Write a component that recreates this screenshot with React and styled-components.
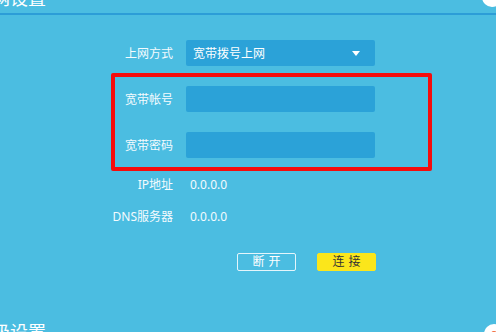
import React from 'react'
import styled, { createGlobalStyle } from 'styled-components'

const GlobalStyle = createGlobalStyle`
  html, body {
    margin: 0;
    padding: 0;
    background: #4bbde1;
  }
  body {
    font-family: "Noto Sans", "Noto Sans CJK SC", sans-serif;
    overflow: hidden;
  }
`

const Page = styled.div`
  position: relative;
  width: 496px;
  height: 332px;
  overflow: hidden;
  background: #4bbde1;
  color: #fff;
`

const Header = styled.div`
  display: flex;
  align-items: flex-end;
  height: 13px;
  border-bottom: 2px solid #2c9dd7;
`

const SectionTitle = styled.h2`
  margin: 0 0 ${({ $mb }) => $mb || 0}px -26px;
  font-size: 18px;
  line-height: 18px;
  font-weight: 400;
  white-space: nowrap;
`

const HelpBadge = styled.svg`
  position: absolute;
  right: ${({ $right }) => $right}px;
  ${({ $top }) => ($top !== undefined ? `top: ${$top}px;` : '')}
  ${({ $bottom }) => ($bottom !== undefined ? `bottom: ${$bottom}px;` : '')}
  width: 20px;
  height: 20px;
`

const Form = styled.div`
  margin: 25px 0 0 111px;
  width: 321px;
  display: flex;
  flex-direction: column;
`

const Row = styled.div`
  display: grid;
  grid-template-columns: 62px 189px;
  column-gap: 13px;
  align-items: center;
  height: ${({ $h }) => $h}px;
  margin-top: ${({ $mt }) => $mt || 0}px;
`

const Label = styled.div`
  text-align: right;
  font-size: 12px;
  white-space: nowrap;
  color: #f4fbfe;
`

const Field = styled.div`
  box-sizing: border-box;
  height: 26px;
  padding: 0 7px;
  display: flex;
  align-items: center;
  justify-content: space-between;
  background: #2ba2d8;
  border-radius: 2px;
  font-size: 12px;
`

const Caret = styled.span`
  width: 0;
  height: 0;
  margin-right: 8px;
  border-left: 4px solid transparent;
  border-right: 4px solid transparent;
  border-top: 5px solid #fff;
`

const Highlight = styled.div`
  margin-top: 7px;
  padding: 13px 0;
  display: flex;
  flex-direction: column;
  gap: 20px;
  border-radius: 2px;
  box-shadow: inset 0 0 0 4px #f50c0c;
`

const Value = styled.div`
  padding-left: 4px;
  font-size: 12px;
  color: #f4fbfe;
`

const Actions = styled.div`
  display: flex;
  justify-content: flex-end;
  gap: 21px;
  margin-right: -1px;
`

const Button = styled.button`
  box-sizing: border-box;
  width: 59px;
  height: 18px;
  padding: 0;
  border-radius: 2px;
  font-family: inherit;
  font-size: 12px;
  line-height: 16px;
  letter-spacing: 4px;
  text-indent: 4px;
  border: 1px solid ${({ $primary }) => ($primary ? '#fbe61b' : 'rgba(255,255,255,0.85)')};
  background: ${({ $primary }) => ($primary ? '#fbe61b' : 'transparent')};
  color: ${({ $primary }) => ($primary ? '#333' : '#fff')};
`

const Footer = styled.div`
  margin-top: 52px;
`

function Help(props) {
  return (
    <HelpBadge viewBox="0 0 20 20" {...props}>
      <circle cx="10" cy="10" r="10" fill="#fff" />
      <circle cx="10" cy="10" r="3" fill="#f26a3b" />
    </HelpBadge>
  )
}

export default function App() {
  return (
    <Page>
      <GlobalStyle />
      <Header>
        <SectionTitle $mb={6}>上网设置</SectionTitle>
      </Header>
      <Help $right={-6} $top={-13} />

      <Form>
        <Row $h={26}>
          <Label>上网方式</Label>
          <Field>
            宽带拨号上网
            <Caret />
          </Field>
        </Row>

        <Highlight>
          <Row $h={26}>
            <Label>宽带帐号</Label>
            <Field />
          </Row>
          <Row $h={26}>
            <Label>宽带密码</Label>
            <Field />
          </Row>
        </Highlight>

        <Row $h={16} $mt={4}>
          <Label>IP地址</Label>
          <Value>0.0.0.0</Value>
        </Row>
        <Row $h={16} $mt={16}>
          <Label>DNS服务器</Label>
          <Value>0.0.0.0</Value>
        </Row>

        <Row $h={18} $mt={30}>
          <span />
          <Actions>
            <Button>断开</Button>
            <Button $primary>连接</Button>
          </Actions>
        </Row>
      </Form>

      <Footer>
        <SectionTitle>高级设置</SectionTitle>
      </Footer>
      <Help $right={-8} $bottom={-12} />
    </Page>
  )
}
